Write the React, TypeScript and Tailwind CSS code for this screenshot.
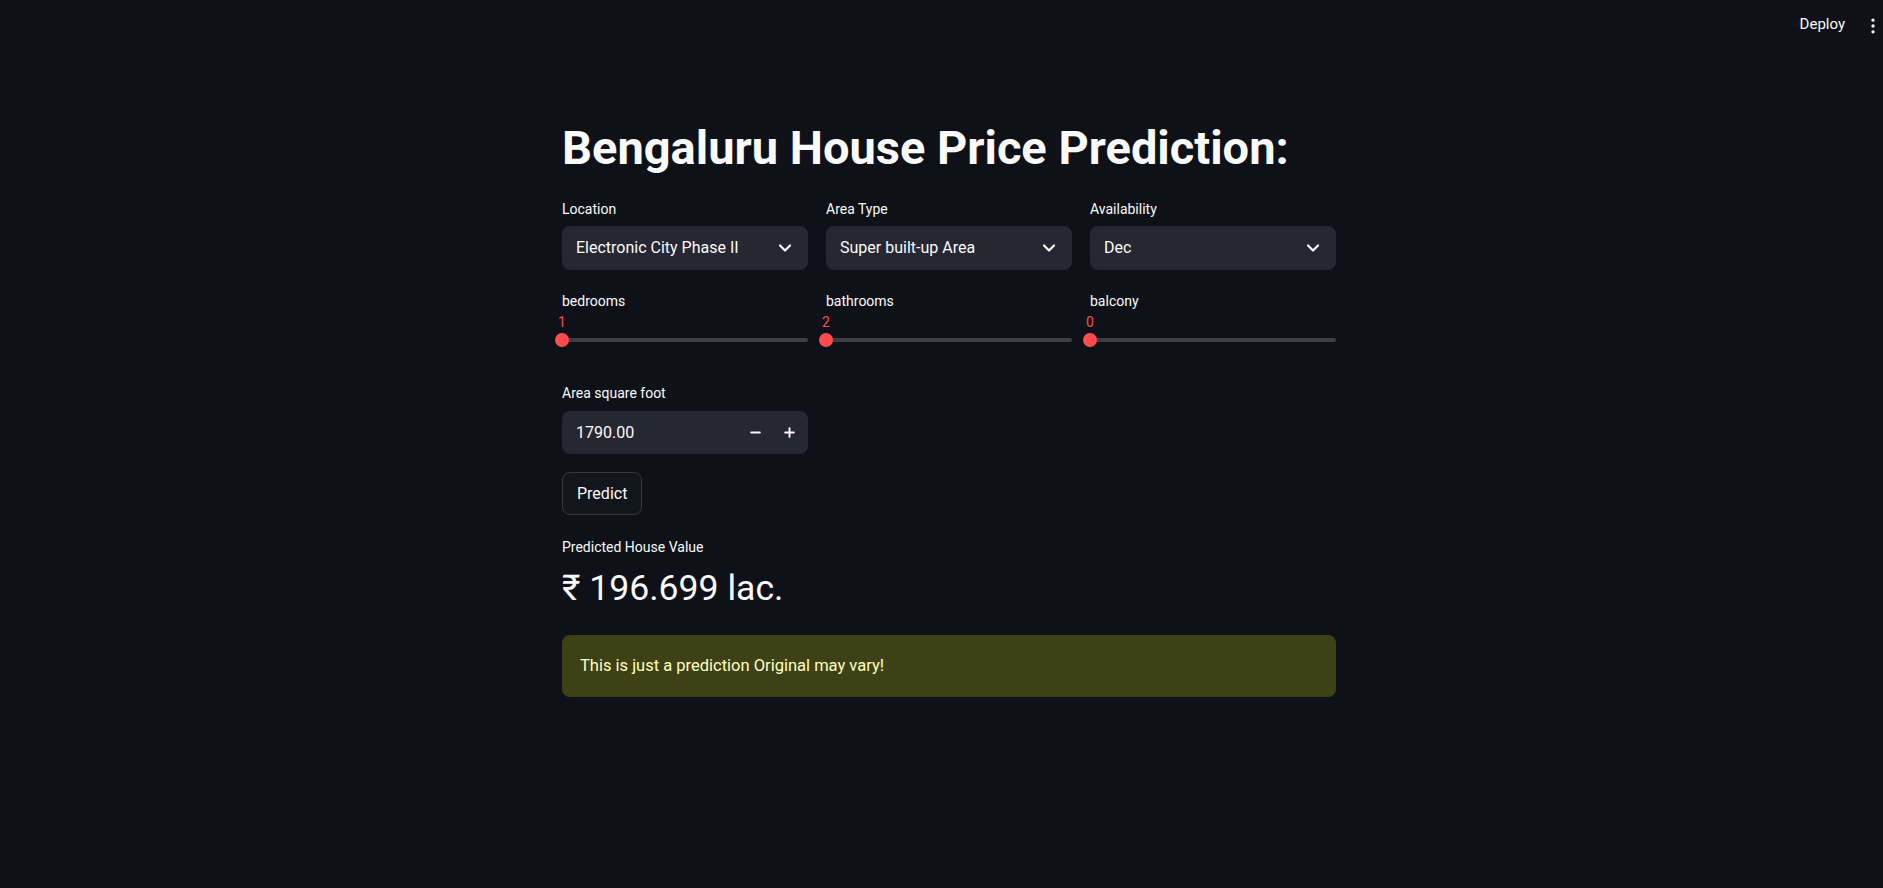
import { ChevronDown, EllipsisVertical, Minus, Plus } from "lucide-react";

const font = { fontFamily: "Roboto, 'Noto Sans', sans-serif" };

function SelectBox({ label, value }: { label: string; value: string }) {
  return (
    <div className="flex flex-col">
      <label className="text-[14px] leading-[20px] text-[#fafafa]">{label}</label>
      <div className="mt-[7px] h-[44px] rounded-[8px] bg-[#262730] pl-[14px] pr-[13px] flex items-center justify-between">
        <span className="text-[16px] text-[#fafafa]">{value}</span>
        <ChevronDown size={20} strokeWidth={2.6} className="text-[#fafafa]" />
      </div>
    </div>
  );
}

function Slider({ label, value }: { label: string; value: number }) {
  return (
    <div className="flex flex-col">
      <label className="text-[14px] leading-[20px] text-[#fafafa]">{label}</label>
      <div className="relative h-[20px] mt-[1px]">
        <span className="absolute left-[-7px] top-0 w-[14px] text-center text-[14px] leading-[20px] text-[#ff4b4b]">
          {value}
        </span>
      </div>
      <div className="relative h-[16px] flex items-center">
        <div className="h-[4px] w-full rounded-full bg-[#3d3f47]" />
        <div className="absolute left-[-7px] top-[1px] h-[14px] w-[14px] rounded-full bg-[#ff4b4b]" />
      </div>
    </div>
  );
}

export default function App() {
  return (
    <div className="min-h-screen bg-[#0e1117] text-[#fafafa]" style={font}>
      {/* Header */}
      <header className="h-[60px] flex justify-end items-start pt-[14px]">
        <span className="text-[15px] leading-[20px] text-[#fafafa]">Deploy</span>
        <div className="ml-[18px] mt-[2px] w-[20px] h-[20px]">
          <EllipsisVertical size={20} strokeWidth={2} className="text-[#fafafa]" />
        </div>
      </header>

      <main className="ml-[562px] w-[774px] pt-[60px] pb-20">
        <h1 className="text-[47px] leading-[56px] font-bold">
          Bengaluru House Price Prediction:
        </h1>

        <div className="mt-[23px] grid grid-cols-3 gap-[18px]">
          <SelectBox label="Location" value="Electronic City Phase II" />
          <SelectBox label="Area Type" value="Super built-up Area" />
          <SelectBox label="Availability" value="Dec" />
        </div>

        <div className="mt-[21px] grid grid-cols-3 gap-[18px]">
          <Slider label="bedrooms" value={1} />
          <Slider label="bathrooms" value={2} />
          <Slider label="balcony" value={0} />
        </div>

        {/* Area input */}
        <div className="mt-[35px] w-[246px] flex flex-col">
          <label className="text-[14px] leading-[20px]">Area square foot</label>
          <div className="mt-[8px] h-[43px] rounded-[8px] bg-[#262730] pl-[14px] pr-[2px] flex items-center">
            <span className="flex-1 text-[16px]">1790.00</span>
            <button className="w-[34px] h-full flex items-center justify-center">
              <Minus size={15} strokeWidth={3} />
            </button>
            <button className="w-[34px] h-full flex items-center justify-center">
              <Plus size={15} strokeWidth={3} />
            </button>
          </div>
        </div>

        <button className="mt-[18px] h-[43px] px-[14px] rounded-[8px] border border-[#363840] bg-[#13151c] text-[16px]">
          Predict
        </button>

        {/* Result metric */}
        <div className="mt-[22px]">
          <div className="text-[14px] leading-[20px]">Predicted House Value</div>
          <div className="mt-[9px] text-[35.6px] leading-[44px]">₹ 196.699 lac.</div>
        </div>

        <div className="mt-[25px] h-[62px] rounded-[8px] bg-[#3e4116] px-[18px] flex items-center">
          <span className="text-[16.5px] leading-[24px] text-[#ffffc2]">This is just a prediction Original may vary!</span>
        </div>
      </main>
    </div>
  );
}
